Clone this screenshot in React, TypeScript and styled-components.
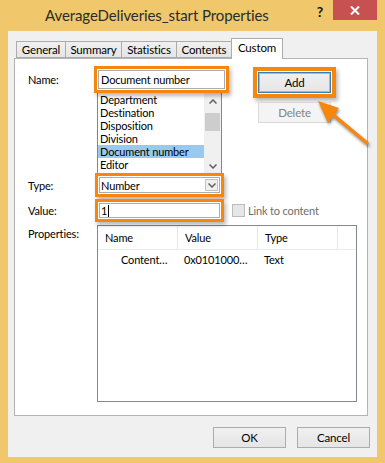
import React from "react";
import styled, { createGlobalStyle } from "styled-components";

const ORANGE = "#F7860F";

const Global = createGlobalStyle`
  html, body { margin: 0; padding: 0; background: #F0C86B; }
  body { font-family: Lato, "Noto Sans", sans-serif; }
`;

const Window = styled.div`
  position: relative;
  width: 385px;
  height: 463px;
  background: #f0c86b;
  display: flex;
  flex-direction: column;
  overflow: hidden;
  font-family: Lato, "Noto Sans", sans-serif;
  font-size: 11px;
  letter-spacing: -0.15px;
  color: #000;
`;

const TitleBar = styled.div`
  height: 31px;
  flex-shrink: 0;
  display: flex;
  align-items: flex-start;
`;

const Title = styled.div`
  flex: 1;
  padding-left: 45px;
  line-height: 30px;
  font-size: 15px;
  letter-spacing: -0.1px;
  color: #2b2b2b;
  white-space: nowrap;
`;

const HelpButton = styled.div`
  width: 26px;
  height: 22px;
  display: flex;
  align-items: center;
  justify-content: center;
  font-weight: bold;
  font-size: 14px;
  color: #111;
`;

const CloseButton = styled.div`
  width: 44px;
  height: 20px;
  margin-right: 8px;
  background: #c75050;
  display: flex;
  align-items: center;
  justify-content: center;
`;

const Client = styled.div`
  margin: 0 8px;
  height: 426px;
  flex-shrink: 0;
  box-sizing: border-box;
  background: #f0f0f0;
  padding: 7px 9px 0 6px;
  display: flex;
  flex-direction: column;
`;

const TabStrip = styled.div`
  height: 20px;
  display: flex;
  align-items: flex-end;
  padding-left: 2px;
  position: relative;
  z-index: 2;
`;

const Tab = styled.div<{ $w: number; $active?: boolean }>`
  width: ${(p) => p.$w}px;
  height: ${(p) => (p.$active ? 21 : 17)}px;
  margin-bottom: ${(p) => (p.$active ? -1 : 0)}px;
  margin-right: -1px;
  box-sizing: border-box;
  border: 1px solid #acacac;
  border-bottom: ${(p) => (p.$active ? "none" : "1px solid #acacac")};
  background: ${(p) => (p.$active ? "#fff" : "linear-gradient(#f0f0f0, #e5e5e5)")};
  display: flex;
  align-items: center;
  justify-content: center;
  padding-bottom: ${(p) => (p.$active ? 3 : 0)}px;
  font-size: 11.5px;
  white-space: nowrap;
  position: relative;
  z-index: ${(p) => (p.$active ? 2 : 1)};
`;

const Panel = styled.div`
  height: 358px;
  box-sizing: border-box;
  border: 1px solid #b4b4b4;
  background: #fff;
  padding: 11px 10px 0 13px;
`;

const FormGrid = styled.div`
  display: grid;
  grid-template-columns: 69px 129px 1fr;
  align-items: start;
`;

const Label = styled.div<{ $mt?: number; $row: number }>`
  grid-column: 1;
  grid-row: ${(p) => p.$row};
  margin-top: ${(p) => p.$mt ?? 0}px;
  line-height: ${(p) => (p.$row === 5 ? "18px" : "normal")};
  align-self: ${(p) => (p.$row === 5 ? "start" : "center")};
  white-space: nowrap;
`;

const Highlight = `
  box-shadow: 0 0 0 1px #fff, 0 0 0 4px ${ORANGE}, 2px 3px 4px 4px rgba(0, 0, 0, 0.28);
`;

const NameInput = styled.div`
  grid-column: 2;
  grid-row: 1;
  position: relative;
  z-index: 3;
  margin-left: 1px;
  width: 127px;
  height: 19px;
  box-sizing: border-box;
  border: 1px solid #abadb3;
  background: #fff;
  padding-left: 2px;
  display: flex;
  align-items: center;
  white-space: nowrap;
  ${Highlight}
`;

const ListBox = styled.div`
  grid-column: 2;
  grid-row: 2;
  margin-top: 3px;
  width: 125px;
  height: 84px;
  box-sizing: border-box;
  border: 1px solid #828790;
  display: flex;
  overflow: hidden;
`;

const ListItems = styled.div`
  flex: 1;
  display: flex;
  flex-direction: column;
`;

const ListItem = styled.div<{ $selected?: boolean }>`
  height: 13px;
  line-height: 13px;
  padding-left: 2px;
  white-space: nowrap;
  overflow: hidden;
  background: ${(p) => (p.$selected ? "#99c9ef" : "transparent")};
`;

const ScrollBar = styled.div`
  width: 17px;
  background: #f0f0f0;
  display: flex;
  flex-direction: column;
`;

const ScrollArrow = styled.div`
  height: 17px;
  display: flex;
  align-items: center;
  justify-content: center;
`;

const ScrollTrack = styled.div`
  flex: 1;
  display: flex;
  flex-direction: column;
  align-items: center;
`;

const ScrollThumb = styled.div`
  margin-top: 3px;
  width: 15px;
  height: 18px;
  background: #cdcdcd;
`;

const ButtonColumn = styled.div`
  grid-column: 3;
  grid-row: 1 / span 2;
  padding: 2px 0 0 32px;
  display: flex;
  flex-direction: column;
  align-items: flex-start;
  gap: 9px;
`;

const Button = styled.div<{ $focused?: boolean; $disabled?: boolean; $highlight?: boolean }>`
  width: 73px;
  height: 21px;
  box-sizing: border-box;
  border: 1px solid ${(p) => (p.$disabled ? "#d9d9d9" : p.$focused ? "#3c7fb1" : "#acacac")};
  background: ${(p) => (p.$disabled ? "#f4f4f4" : "linear-gradient(#f0f0f0, #e5e5e5)")};
  color: ${(p) => (p.$disabled ? "#838383" : "#000")};
  font-size: 11.5px;
  display: flex;
  align-items: center;
  justify-content: center;
  ${(p) =>
    p.$highlight
      ? `box-shadow: inset 0 0 0 1px #8ec1ea, 0 0 0 1px #fff, 0 0 0 5px ${ORANGE}, 2px 3px 4px 5px rgba(0,0,0,0.28);`
      : ""}
`;

const Combo = styled.div`
  grid-column: 2;
  grid-row: 3;
  margin: 1px 0 0 2px;
  width: 121px;
  height: 16px;
  box-sizing: border-box;
  border: 1px solid #acacac;
  background: #fff;
  display: flex;
  align-items: center;
  padding-left: 1px;
  position: relative;
  z-index: 3;
  ${Highlight}
`;

const ComboText = styled.div`
  flex: 1;
  white-space: nowrap;
`;

const DropButton = styled.div`
  width: 13px;
  height: 12px;
  margin-right: 1px;
  box-sizing: border-box;
  border: 1px solid #c4c4c4;
  background: #efefef;
  display: flex;
  align-items: center;
  justify-content: center;
`;

const ValueInput = styled.div`
  grid-column: 2;
  grid-row: 4;
  margin: 10px 0 0 2px;
  width: 121px;
  height: 15px;
  box-sizing: border-box;
  border: 1px solid #abadb3;
  background: #fff;
  display: flex;
  align-items: center;
  padding-left: 1px;
  position: relative;
  z-index: 3;
  ${Highlight}
`;

const Caret = styled.span`
  display: inline-block;
  width: 1px;
  height: 12px;
  background: #000;
  margin-left: 1px;
`;

const CheckRow = styled.div`
  grid-column: 3;
  grid-row: 4;
  margin: 10px 0 0 6px;
  height: 15px;
  display: flex;
  align-items: center;
  gap: 3px;
  color: #6d6d6d;
  white-space: nowrap;
`;

const CheckBox = styled.div`
  width: 13px;
  height: 13px;
  box-sizing: border-box;
  border: 1px solid #bcbcbc;
  background: #e6e6e6;
`;

const PropList = styled.div`
  grid-column: 2 / span 2;
  grid-row: 5;
  margin-top: 7px;
  height: 177px;
  box-sizing: border-box;
  border: 1px solid #828790;
  display: flex;
  flex-direction: column;
`;

const HeaderRow = styled.div`
  height: 24px;
  box-sizing: border-box;
  border-bottom: 1px solid #e8edf5;
  display: flex;
`;

const HeaderCell = styled.div<{ $w: number }>`
  width: ${(p) => p.$w}px;
  box-sizing: border-box;
  border-right: 1px solid #e3e8f0;
  padding-left: 7px;
  display: flex;
  align-items: center;
`;

const DataRow = styled.div`
  height: 18px;
  display: flex;
  align-items: center;
`;

const DataCell = styled.div<{ $w: number; $pl: number }>`
  width: ${(p) => p.$w}px;
  box-sizing: border-box;
  padding-left: ${(p) => p.$pl}px;
  white-space: nowrap;
`;

const ButtonRow = styled.div`
  margin: 11px -2px 0 0;
  display: flex;
  justify-content: flex-end;
  gap: 11px;
`;

const Overlay = styled.svg`
  position: absolute;
  left: 0;
  top: 0;
  pointer-events: none;
  z-index: 10;
  filter: drop-shadow(1px 2px 1.5px rgba(0, 0, 0, 0.45));
`;

const Chevron = ({ up }: { up?: boolean }) => (
  <svg width="8" height="5" viewBox="0 0 8 5">
    <path
      d={up ? "M0.5 4.5 L4 1 L7.5 4.5" : "M0.5 0.5 L4 4 L7.5 0.5"}
      fill="none"
      stroke="#606060"
      strokeWidth="1.5"
    />
  </svg>
);

const tabs = [
  { label: "General", w: 50 },
  { label: "Summary", w: 57 },
  { label: "Statistics", w: 56 },
  { label: "Contents", w: 56 },
  { label: "Custom", w: 52, active: true },
];

const items = ["Department", "Destination", "Disposition", "Division", "Document number", "Editor"];

export default function App() {
  return (
    <>
      <Global />
      <Window>
        <TitleBar>
          <Title>AverageDeliveries_start Properties</Title>
          <HelpButton>?</HelpButton>
          <CloseButton>
            <svg width="10" height="9" viewBox="0 0 10 9">
              <path d="M1 0.5 L9 8.5 M9 0.5 L1 8.5" stroke="#fff" strokeWidth="2" />
            </svg>
          </CloseButton>
        </TitleBar>
        <Client>
          <TabStrip>
            {tabs.map((t) => (
              <Tab key={t.label} $w={t.w} $active={t.active}>
                {t.label}
              </Tab>
            ))}
          </TabStrip>
          <Panel>
            <FormGrid>
              <Label $row={1}>Name:</Label>
              <NameInput>Document number</NameInput>
              <ListBox>
                <ListItems>
                  {items.map((it) => (
                    <ListItem key={it} $selected={it === "Document number"}>
                      {it}
                    </ListItem>
                  ))}
                </ListItems>
                <ScrollBar>
                  <ScrollArrow>
                    <Chevron up />
                  </ScrollArrow>
                  <ScrollTrack>
                    <ScrollThumb />
                  </ScrollTrack>
                  <ScrollArrow>
                    <Chevron />
                  </ScrollArrow>
                </ScrollBar>
              </ListBox>
              <ButtonColumn>
                <Button $focused $highlight>
                  Add
                </Button>
                <Button $disabled>Delete</Button>
              </ButtonColumn>
              <Label $row={3} $mt={1}>
                Type:
              </Label>
              <Combo>
                <ComboText>Number</ComboText>
                <DropButton>
                  <Chevron />
                </DropButton>
              </Combo>
              <Label $row={4} $mt={10}>
                Value:
              </Label>
              <ValueInput>
                1<Caret />
              </ValueInput>
              <CheckRow>
                <CheckBox />
                Link to content
              </CheckRow>
              <Label $row={5} $mt={7}>
                Properties:
              </Label>
              <PropList>
                <HeaderRow>
                  <HeaderCell $w={80}>Name</HeaderCell>
                  <HeaderCell $w={80}>Value</HeaderCell>
                  <HeaderCell $w={80}>Type</HeaderCell>
                </HeaderRow>
                <DataRow>
                  <DataCell $w={80} $pl={23}>
                    Content…
                  </DataCell>
                  <DataCell $w={80} $pl={6}>
                    0x0101000…
                  </DataCell>
                  <DataCell $w={80} $pl={6}>
                    Text
                  </DataCell>
                </DataRow>
              </PropList>
            </FormGrid>
          </Panel>
          <ButtonRow>
            <Button>OK</Button>
            <Button>Cancel</Button>
          </ButtonRow>
        </Client>
        <Overlay width="385" height="463" viewBox="0 0 385 463">
          <line x1="367" y1="143" x2="331" y2="113" stroke={ORANGE} strokeWidth="3.5" strokeLinecap="round" />
          <polygon points="318,101 339,108 328,123" fill={ORANGE} />
        </Overlay>
      </Window>
    </>
  );
}
